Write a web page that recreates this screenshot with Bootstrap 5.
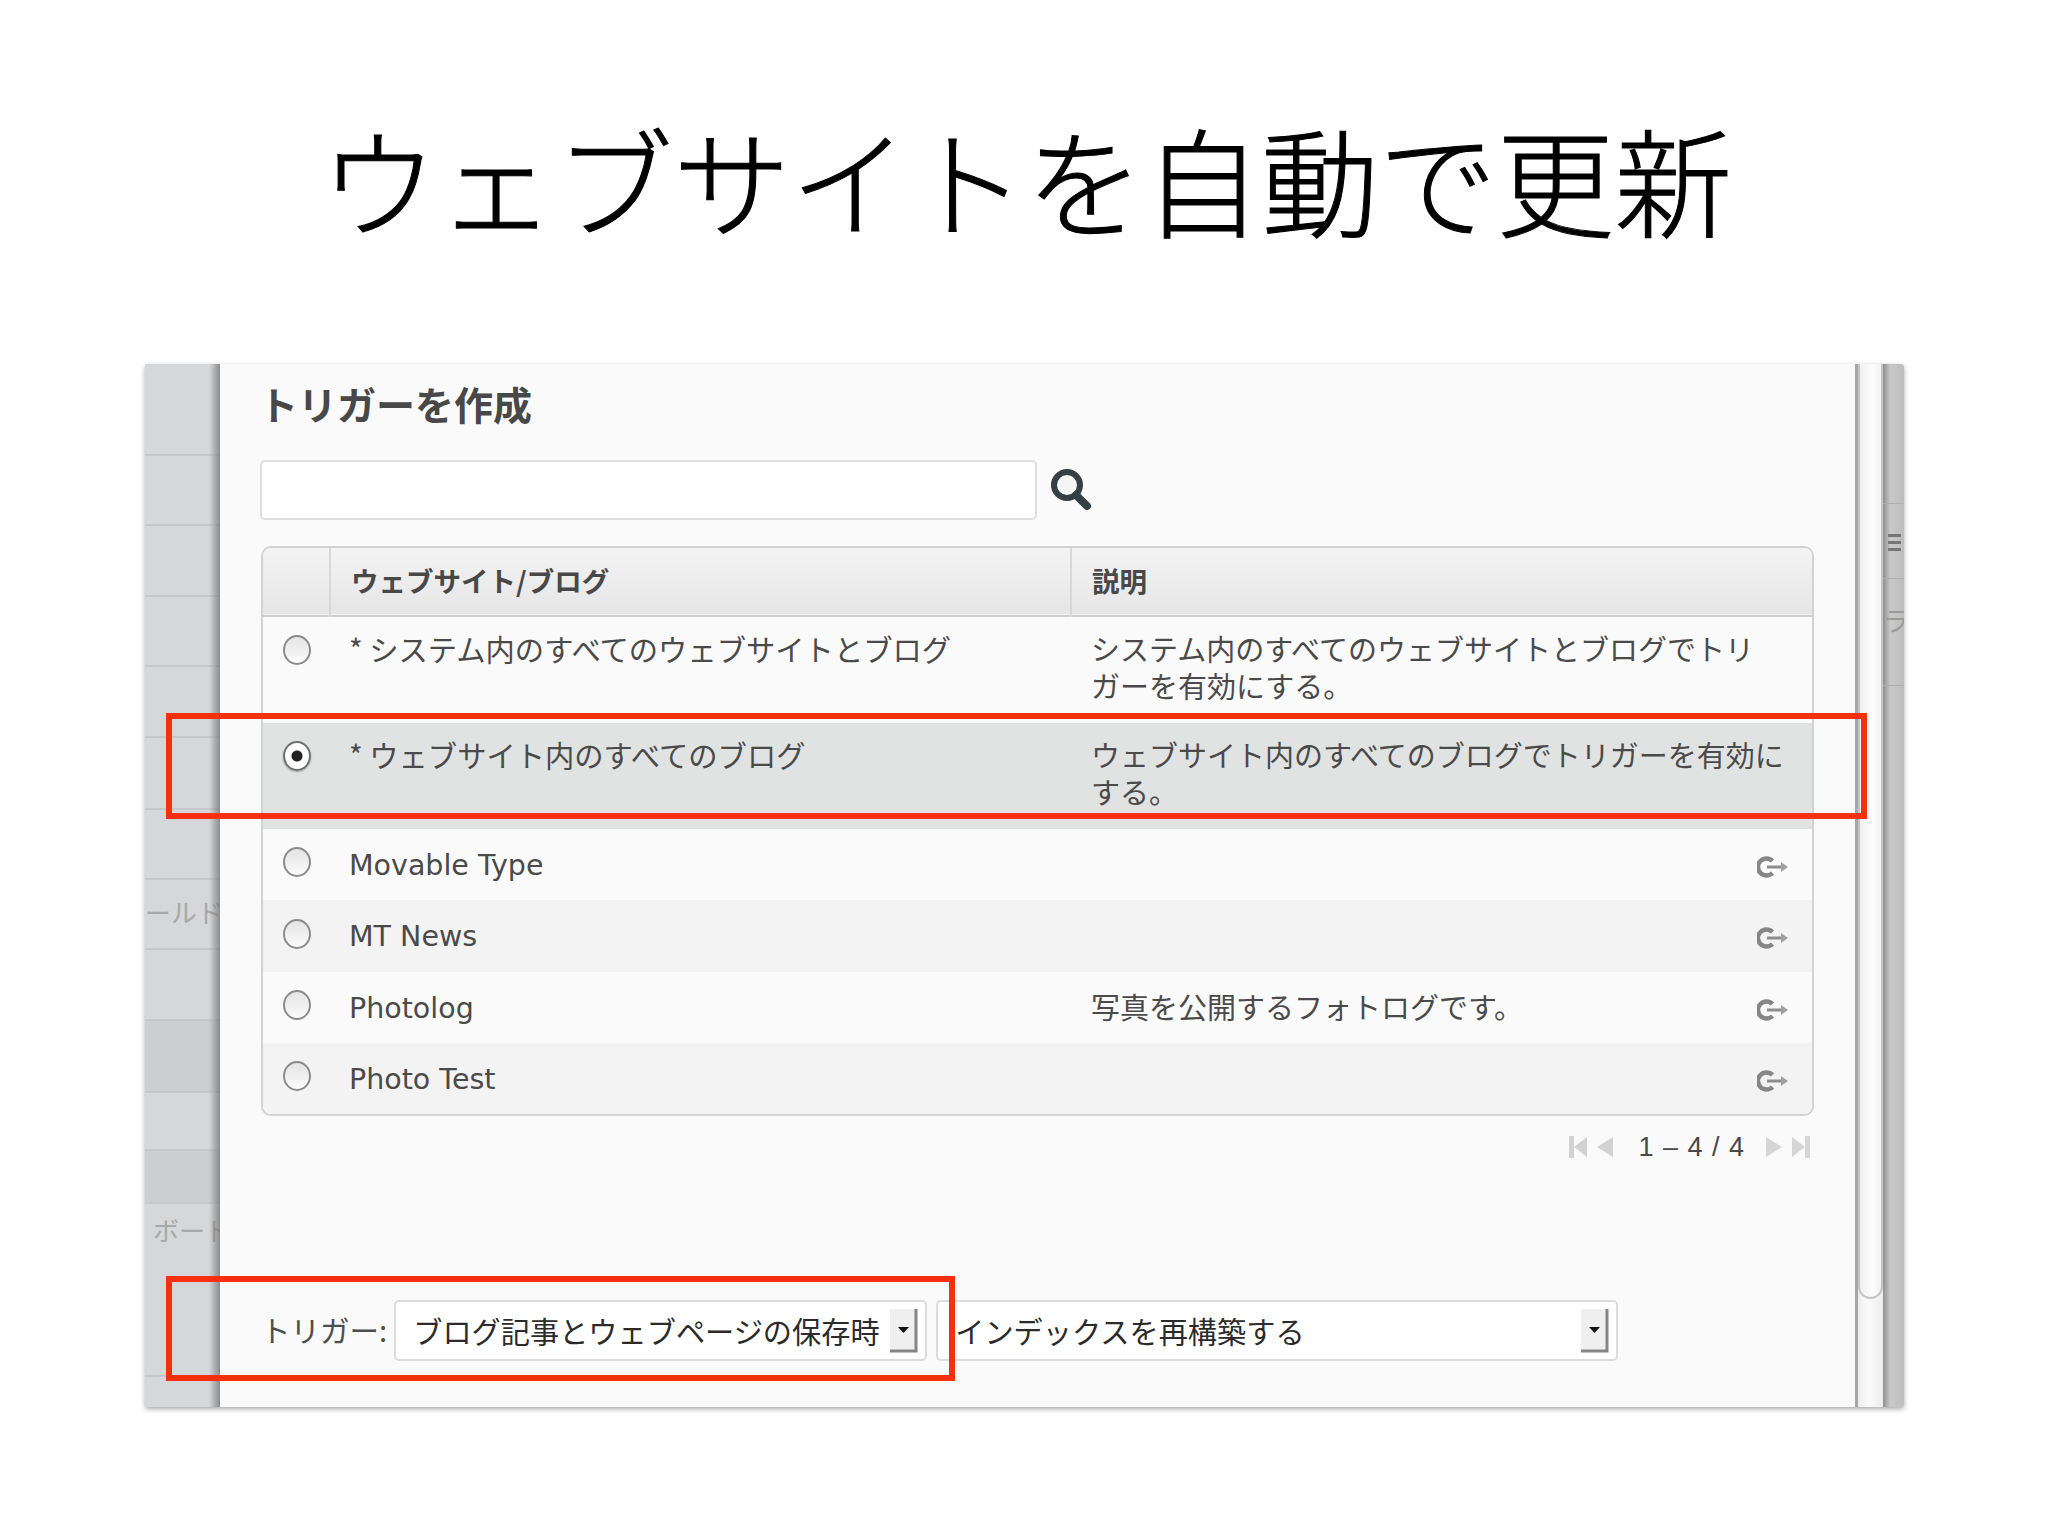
<!DOCTYPE html>
<html lang="ja">
<head>
<meta charset="utf-8">
<title>ウェブサイトを自動で更新</title>
<link href="https://cdn.jsdelivr.net/npm/bootstrap@5.3.0/dist/css/bootstrap.min.css" rel="stylesheet">
<style>
html,body{background:#fff;height:100%;}
body{font-family:"Noto Sans CJK JP","Liberation Sans",sans-serif;width:2048px;height:1536px;overflow:hidden;color:#4a4a4a;}
.slide-title{height:364px;padding:108px 0 0 4px;margin:0;font-size:117.7px;line-height:140px;font-weight:300;-webkit-text-stroke:1px #000;color:#000;text-align:center;letter-spacing:0;}
.shot{position:relative;margin-left:145px;width:1759px;height:1043px;box-shadow:0 2px 5px rgba(0,0,0,.35);border-radius:3px;overflow:visible;background:#fafafa;}
.side-l{width:75px;flex:none;overflow:hidden;background:#d6d7d9;position:relative;color:#a8a8a8;font-size:26px;}
.side-l::after{content:"";position:absolute;top:0;bottom:0;right:0;width:11px;background:linear-gradient(90deg,rgba(120,120,120,0),rgba(120,120,120,.8));}
.side-row{border-bottom:2px solid #c6c7c9;white-space:nowrap;}
.side-band{background:#cdced0;}
.panel-main{width:1638px;flex:none;padding:16px 41px 45px 41px;background:#fafafa;border-right:3px solid #a6a6a6;}
.panel-head{font-size:39px;line-height:46px;font-weight:700;margin:0 0 34px -2px;color:#484848;}
.search-box{width:777px;height:60px;margin-left:-1px;border:2px solid #dedede;border-radius:5px;background:#fff;}
.search-btn{margin-left:12px;margin-top:-3px;}
.list-wrap{margin-top:26px;border:2px solid #d2d2d2;border-radius:10px;overflow:hidden;}
.list-wrap table{table-layout:fixed;width:100%;margin:0;--bs-table-bg:transparent;--bs-table-color:#4a4a4a;font-size:29.3px;line-height:37px;}
.list-wrap th,.list-wrap td{padding:0;border:0;background:transparent;}
.list-wrap thead tr{height:68px;background:linear-gradient(#f3f3f3,#e6e6e6);border-bottom:2px solid #cfcfcf;}
.list-wrap th{font-size:27.5px;font-weight:700;vertical-align:middle;color:#484848;padding:0 0 3px 20px;border-left:2px solid #d8d8d8;}
.list-wrap th:first-child{border-left:0;padding:0;}
.col-radio{width:67px;}
.col-name{width:741px;}
.list-wrap td.cell-radio{text-align:center;}
.list-wrap td.cell-name{padding-left:19px;}
.list-wrap td.cell-desc{padding-left:20px;font-size:29px;}
.row-a td{vertical-align:top;padding-top:13px;}
.row-a .radio-mark{vertical-align:top;margin-top:5px;}
.row-m td{vertical-align:middle;}
.row-m td.cell-radio{padding-bottom:13px;}
.row-m td.cell-name{padding-bottom:2px;}
.row-m .latin{font-family:"DejaVu Sans","Noto Sans CJK JP",sans-serif;font-size:28.5px;color:#4a4a4a;}
.row-h1{height:107px;background:#fafafa;}
.row-h2{height:106px;background:#e1e2e2;}
.row-1{height:71px;background:#fafafa;}
.row-2{height:72px;background:#f3f3f4;}
.row-3{height:71px;background:#fafafa;}
.row-4{height:71px;background:#f3f3f4;}
.radio-mark{width:28px;height:30px;margin:0;border:2.5px solid #8b8b8b;border-radius:50%;background:linear-gradient(#e4e4e4,#fbfbfb);appearance:none;display:inline-block;vertical-align:middle;}
.radio-mark:checked{background:radial-gradient(circle,#222 0 5px,#fff 6px);border-color:#6f6f6f;box-shadow:0 1px 2px rgba(0,0,0,.3);}
.desc-flex{padding-right:23px;}
.desc-flex span{margin-top:-3px;}
.go-icon{width:32px;height:24px;flex:none;margin-top:4px;}
.pager-line{margin-top:16px;height:30px;font-family:"Liberation Sans",sans-serif;font-size:27px;line-height:30px;color:#484848;padding-right:3px;}
.pager-count{margin:0 20px 0 24px;letter-spacing:1px;}
.bottom-bar{margin-top:auto;margin-bottom:1px;font-size:29.5px;color:#4e4e4e;}
.bottom-label{margin:-2px 7px 0 0;}
.pick-a,.pick-b{height:61px;padding:0 40px 2px 17px;border:2px solid #dcdcdc;border-radius:5px;font-size:29.2px;line-height:57px;color:#2b2b2b;background-color:#fff;background-image:url("data:image/svg+xml,%3Csvg xmlns='http://www.w3.org/2000/svg' width='28' height='44'%3E%3Crect x='0' y='0' width='26' height='42' fill='%23efefef'/%3E%3Cpath d='M26 0V42H0' fill='none' stroke='%23858585' stroke-width='3'/%3E%3Cpath d='M8 18h11l-5.500 6z' fill='%23111'/%3E%3C/svg%3E");background-repeat:no-repeat;background-position:right 7px center;background-size:28px 44px;appearance:none;}
.pick-a{width:533px;}
.pick-b{width:682px;margin-left:9px;padding-left:17px;}
.scroll-col{width:25px;flex:none;background:linear-gradient(90deg,#ececec,#fbfbfb 40%,#ececec);position:relative;}
.scroll-thumb{height:935px;border:2px solid #c4c4c4;border-top:0;border-radius:0 0 13px 13px;background:linear-gradient(90deg,#f0f0f0,#fdfdfd 60%,#f2f2f2);}
.side-r{width:21px;flex:none;overflow:hidden;background:linear-gradient(90deg,#8f8f8f,#c9c9c9 35%,#bdbdbd);border-radius:0 3px 3px 0;color:#8a8a8a;}
.strip-a{height:139px;}
.strip-b{height:76px;border-top:1px solid #aeaeae;border-bottom:1px solid #aeaeae;padding:30px 3px 0 5px;}
.strip-bar{height:3px;background:#777;margin-bottom:4px;}
.strip-c{height:107px;border-bottom:1px solid #aeaeae;font-size:26px;line-height:82px;color:#9a9a9a;white-space:nowrap;}
.mark-box{position:absolute;border:6px solid #f5300c;pointer-events:none;}
.mark-one{left:21px;top:349px;width:1701px;height:106px;}
.mark-two{left:21px;top:912px;width:789px;height:105px;}
</style>
</head>
<body>
<h1 class="slide-title">ウェブサイトを自動で更新</h1>
<div class="shot d-flex">
  <div class="side-l d-flex flex-column">
    <div class="side-row" style="height:92px"></div>
    <div class="side-row" style="height:70px"></div>
    <div class="side-row" style="height:71px"></div>
    <div class="side-row" style="height:70px"></div>
    <div class="side-row" style="height:71px"></div>
    <div class="side-row" style="height:72px"></div>
    <div class="side-row" style="height:70px"></div>
    <div class="side-row" style="height:70px;padding-top:12px">ールド</div>
    <div class="side-row" style="height:71px"></div>
    <div class="side-row side-band" style="height:72px"></div>
    <div class="side-row" style="height:58px"></div>
    <div class="side-row side-band" style="height:53px"></div>
    <div class="side-row" style="height:173px;padding-top:6px;padding-left:8px">ボード</div>
    <div style="height:30px"></div>
  </div>

  <div class="panel-main d-flex flex-column">
    <h2 class="panel-head">トリガーを作成</h2>
    <div class="d-flex align-items-center">
      <input type="text" class="form-control search-box" aria-label="検索">
      <svg class="search-btn" width="44" height="44" viewBox="0 0 44 44"><circle cx="18" cy="18" r="13" fill="#f4f5f5" stroke="#363f44" stroke-width="6"/><path d="M27 28 L38 39" stroke="#363f44" stroke-width="8" stroke-linecap="round"/></svg>
    </div>
    <div class="list-wrap">
      <table class="table table-borderless">
        <colgroup><col class="col-radio"><col class="col-name"><col></colgroup>
        <thead><tr><th></th><th>ウェブサイト/ブログ</th><th>説明</th></tr></thead>
        <tbody>
          <tr class="row-a row-h1">
            <td class="cell-radio"><input class="radio-mark" type="radio" name="scope"></td>
            <td class="cell-name">* システム内のすべてのウェブサイトとブログ</td>
            <td class="cell-desc">システム内のすべてのウェブサイトとブログでトリ<br>ガーを有効にする。</td>
          </tr>
          <tr class="row-a row-h2">
            <td class="cell-radio"><input class="radio-mark" type="radio" name="scope" checked></td>
            <td class="cell-name">* ウェブサイト内のすべてのブログ</td>
            <td class="cell-desc">ウェブサイト内のすべてのブログでトリガーを有効に<br>する。</td>
          </tr>
          <tr class="row-m row-1">
            <td class="cell-radio"><input class="radio-mark" type="radio" name="scope"></td>
            <td class="cell-name"><span class="latin">Movable Type</span></td>
            <td class="cell-desc"><div class="d-flex justify-content-end align-items-center desc-flex"><svg class="go-icon" viewBox="0 0 32 24"><path d="M15.500 6 A8.500 8.500 0 1 0 15.500 18" fill="none" stroke="#868686" stroke-width="4.500"/><path d="M10 12H25" stroke="#8c8c8c" stroke-width="3"/><path d="M24 7l7 5-7 5z" fill="#a0a0a0"/></svg></div></td>
          </tr>
          <tr class="row-m row-2">
            <td class="cell-radio"><input class="radio-mark" type="radio" name="scope"></td>
            <td class="cell-name"><span class="latin">MT News</span></td>
            <td class="cell-desc"><div class="d-flex justify-content-end align-items-center desc-flex"><svg class="go-icon" viewBox="0 0 32 24"><path d="M15.500 6 A8.500 8.500 0 1 0 15.500 18" fill="none" stroke="#868686" stroke-width="4.500"/><path d="M10 12H25" stroke="#8c8c8c" stroke-width="3"/><path d="M24 7l7 5-7 5z" fill="#a0a0a0"/></svg></div></td>
          </tr>
          <tr class="row-m row-3">
            <td class="cell-radio"><input class="radio-mark" type="radio" name="scope"></td>
            <td class="cell-name"><span class="latin">Photolog</span></td>
            <td class="cell-desc"><div class="d-flex justify-content-between align-items-center desc-flex"><span>写真を公開するフォトログです。</span><svg class="go-icon" viewBox="0 0 32 24"><path d="M15.500 6 A8.500 8.500 0 1 0 15.500 18" fill="none" stroke="#868686" stroke-width="4.500"/><path d="M10 12H25" stroke="#8c8c8c" stroke-width="3"/><path d="M24 7l7 5-7 5z" fill="#a0a0a0"/></svg></div></td>
          </tr>
          <tr class="row-m row-4">
            <td class="cell-radio"><input class="radio-mark" type="radio" name="scope"></td>
            <td class="cell-name"><span class="latin">Photo Test</span></td>
            <td class="cell-desc"><div class="d-flex justify-content-end align-items-center desc-flex"><svg class="go-icon" viewBox="0 0 32 24"><path d="M15.500 6 A8.500 8.500 0 1 0 15.500 18" fill="none" stroke="#868686" stroke-width="4.500"/><path d="M10 12H25" stroke="#8c8c8c" stroke-width="3"/><path d="M24 7l7 5-7 5z" fill="#a0a0a0"/></svg></div></td>
          </tr>
        </tbody>
      </table>
    </div>
    <div class="pager-line d-flex justify-content-end align-items-center">
      <svg class="me-2" width="20" height="24" viewBox="0 0 20 24"><path d="M1 1h5v22H1zM19 2v20L6 12z" fill="#d2d2d2"/></svg>
      <svg width="18" height="24" viewBox="0 0 18 24"><path d="M17 2v20L1 12z" fill="#d2d2d2"/></svg>
      <span class="pager-count">1 – 4 / 4</span>
      <svg class="me-2" width="18" height="24" viewBox="0 0 18 24"><path d="M1 2v20l16-10z" fill="#d6d6d6"/></svg>
      <svg width="20" height="24" viewBox="0 0 20 24"><path d="M1 2v20l13-10zM14 1h5v22h-5z" fill="#d6d6d6"/></svg>
    </div>
    <div class="bottom-bar d-flex align-items-center">
      <span class="bottom-label">トリガー:</span>
      <select class="pick-a" aria-label="トリガー"><option>ブログ記事とウェブページの保存時</option></select>
      <select class="pick-b" aria-label="アクション"><option>インデックスを再構築する</option></select>
    </div>
  </div>

  <div class="scroll-col"><div class="scroll-thumb"></div></div>

  <div class="side-r">
    <div class="strip-a"></div>
    <div class="strip-b"><div class="strip-bar"></div><div class="strip-bar"></div><div class="strip-bar"></div></div>
    <div class="strip-c">ラ</div>
  </div>

  <div class="mark-box mark-one"></div>
  <div class="mark-box mark-two"></div>
</div>
<script src="https://cdn.jsdelivr.net/npm/bootstrap@5.3.0/dist/js/bootstrap.bundle.min.js"></script>
</body>
</html>
